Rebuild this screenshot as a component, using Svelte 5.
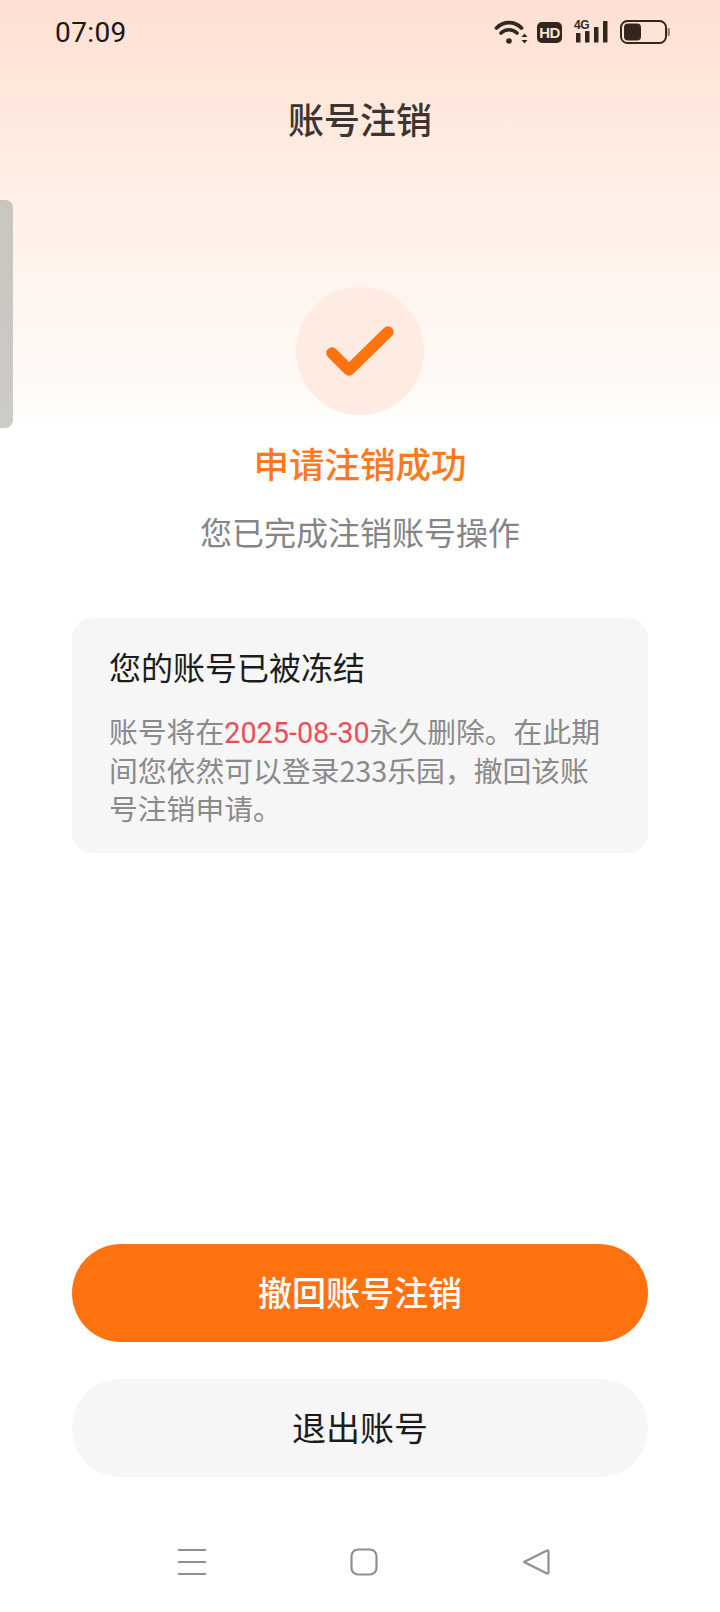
<script>
  const actions = [
    { label: "撤回账号注销", kind: "primary" },
    { label: "退出账号", kind: "secondary" },
  ];
</script>

<div class="page">
  <div class="side-handle"></div>

  <div class="status-bar">
    <span class="time">07:09</span>
    <div class="status-icons">
      <svg class="wifi" width="34" height="26" viewBox="0 0 34 26" fill="none" stroke="#33261f" stroke-linecap="round">
        <path d="M2.5 9 C9.5 1.8 20.5 1.8 27.5 9" stroke-width="3.8" />
        <path d="M7 14 C11.5 9.6 18.5 9.6 23 14" stroke-width="3.6" />
        <circle cx="15" cy="22" r="2.8" fill="#33261f" stroke="none" />
        <path d="M27.5 18 L30.5 14.5 L33.5 18 Z M27.5 21 L33.5 21 L30.5 24.5 Z" fill="#33261f" stroke="none" />
      </svg>
      <span class="hd">HD</span>
      <div class="signal">
        <span class="net">4G</span>
        <svg width="34" height="26" viewBox="0 0 34 26" fill="#33261f">
          <rect x="2" y="14" width="4.5" height="9.5" rx="0.6" />
          <rect x="11" y="12" width="4.5" height="11.5" rx="0.6" />
          <rect x="20" y="8" width="4.5" height="15.5" rx="0.6" />
          <rect x="29" y="2" width="4.5" height="21.5" rx="0.6" />
        </svg>
      </div>
      <svg class="battery" width="50" height="24" viewBox="0 0 50 24" fill="none">
        <rect x="1" y="1" width="45" height="22" rx="6.5" stroke="#33261f" stroke-width="2" />
        <rect x="4" y="3.5" width="17" height="17" rx="4" fill="#33261f" />
        <rect x="47.5" y="8" width="2.4" height="8" rx="1" fill="#8d8078" />
      </svg>
    </div>
  </div>

  <h1 class="title">账号注销</h1>

  <div class="badge">
    <svg width="128" height="128" viewBox="0 0 128 128" fill="none">
      <path d="M36 66 L53 83 L92 45" stroke="#ff7210" stroke-width="11.5" stroke-linecap="round" stroke-linejoin="round" />
    </svg>
  </div>

  <p class="success">申请注销成功</p>
  <p class="subtitle">您已完成注销账号操作</p>

  <section class="card">
    <h2>您的账号已被冻结</h2>
    <p>账号将在<span class="date">2025-08-30</span>永久删除。在此期间您依然可以登录233乐园，撤回该账号注销申请。</p>
  </section>

  <div class="actions">
    {#each actions as action}
      <button class={action.kind}>{action.label}</button>
    {/each}
  </div>

  <nav class="nav-bar">
    <svg width="28" height="26" viewBox="0 0 28 26" stroke="#8f8f8f" stroke-width="2" fill="none">
      <path d="M0 1 H28 M0 13 H28 M0 25 H28" />
    </svg>
    <svg width="28" height="28" viewBox="0 0 28 28" stroke="#8f8f8f" stroke-width="2.2" fill="none">
      <rect x="1.5" y="1.5" width="25" height="25" rx="6.5" />
    </svg>
    <svg width="28" height="26" viewBox="0 0 28 26" stroke="#8f8f8f" stroke-width="2.2" fill="none" stroke-linejoin="round">
      <path d="M2 13 L25 1.5 Q26.5 1.2 26.5 3 V23 Q26.5 24.8 25 24.5 Z" />
    </svg>
  </nav>
</div>

<style>
  :global(body) {
    margin: 0;
    background: #fff;
  }

  .page {
    position: relative;
    width: 720px;
    height: 1612px;
    overflow: hidden;
    display: flex;
    flex-direction: column;
    align-items: center;
    background: linear-gradient(180deg, #fee0d3 0, #feeadf 130px, #fff1e9 230px, #fffaf7 390px, #fff 422px);
    font-family: "Noto Sans CJK SC", "Noto Sans", sans-serif;
  }

  .side-handle {
    position: absolute;
    left: 0;
    top: 200px;
    width: 13px;
    height: 228px;
    border-radius: 0 8px 8px 0;
    background: linear-gradient(180deg, #c9c5bf, #cbcbc8);
  }

  .status-bar {
    box-sizing: border-box;
    width: 100%;
    height: 64px;
    padding: 0 50px 0 55px;
    display: flex;
    align-items: center;
    justify-content: space-between;
    color: #1d1613;
  }

  .time {
    font-family: Roboto, sans-serif;
    font-size: 28px;
    letter-spacing: 0.4px;
  }

  .status-icons {
    display: flex;
    align-items: center;
  }

  .wifi {
    margin-right: 9px;
  }

  .hd {
    width: 25px;
    height: 21px;
    border-radius: 5px;
    background: #33261f;
    color: #fee0d3;
    font-family: "Liberation Sans", sans-serif;
    font-size: 15px;
    font-weight: 700;
    line-height: 21px;
    text-align: center;
    letter-spacing: -0.5px;
    margin-right: 12px;
  }

  .signal {
    position: relative;
    width: 34px;
    height: 26px;
    margin-right: 12px;
  }

  .signal svg {
    display: block;
  }

  .net {
    position: absolute;
    left: 0;
    top: -1px;
    font-family: "Liberation Sans", sans-serif;
    font-size: 12px;
    font-weight: 700;
    line-height: 14px;
    color: #33261f;
    letter-spacing: -0.5px;
  }

  .title {
    margin: 30px 0 0;
    font-size: 36px;
    line-height: 48px;
    font-weight: 500;
    color: #3c3430;
  }

  .badge {
    margin-top: 145px;
    width: 128px;
    height: 128px;
    border-radius: 50%;
    background: #feece3;
  }

  .badge svg {
    display: block;
  }

  .success {
    margin: 23px 0 0;
    font-size: 35.5px;
    line-height: 50px;
    font-weight: 500;
    color: #ff7a1c;
  }

  .subtitle {
    margin: 21px 0 0;
    font-size: 32px;
    line-height: 44px;
    color: #858585;
  }

  .card {
    box-sizing: border-box;
    width: 576px;
    height: 235px;
    margin-top: 65px;
    padding: 26px 36px 0 37px;
    border-radius: 20px;
    background: #f6f6f7;
  }

  .card h2 {
    margin: 0;
    font-size: 32px;
    line-height: 44px;
    font-weight: 400;
    color: #1c1c1c;
  }

  .card p {
    margin: 24px 0 0;
    font-size: 28.8px;
    line-height: 38.5px;
    color: #8a8a8a;
  }

  .date {
    color: #ee4d57;
    font-family: Roboto, sans-serif;
    line-height: 1;
  }

  .actions {
    margin-top: auto;
    display: flex;
    flex-direction: column;
    gap: 37px;
  }

  button {
    width: 576px;
    height: 98px;
    border: none;
    border-radius: 49px;
    font-family: inherit;
    font-size: 34px;
    padding: 0 0 4px;
  }

  .primary {
    background: #ff7210;
    color: #fff;
    font-weight: 500;
  }

  .secondary {
    background: #f6f6f6;
    color: #1c1c1c;
  }

  .nav-bar {
    height: 48px;
    margin: 61px 0 26px;
    padding-left: 7px;
    display: flex;
    align-items: center;
    gap: 144px;
  }
</style>
